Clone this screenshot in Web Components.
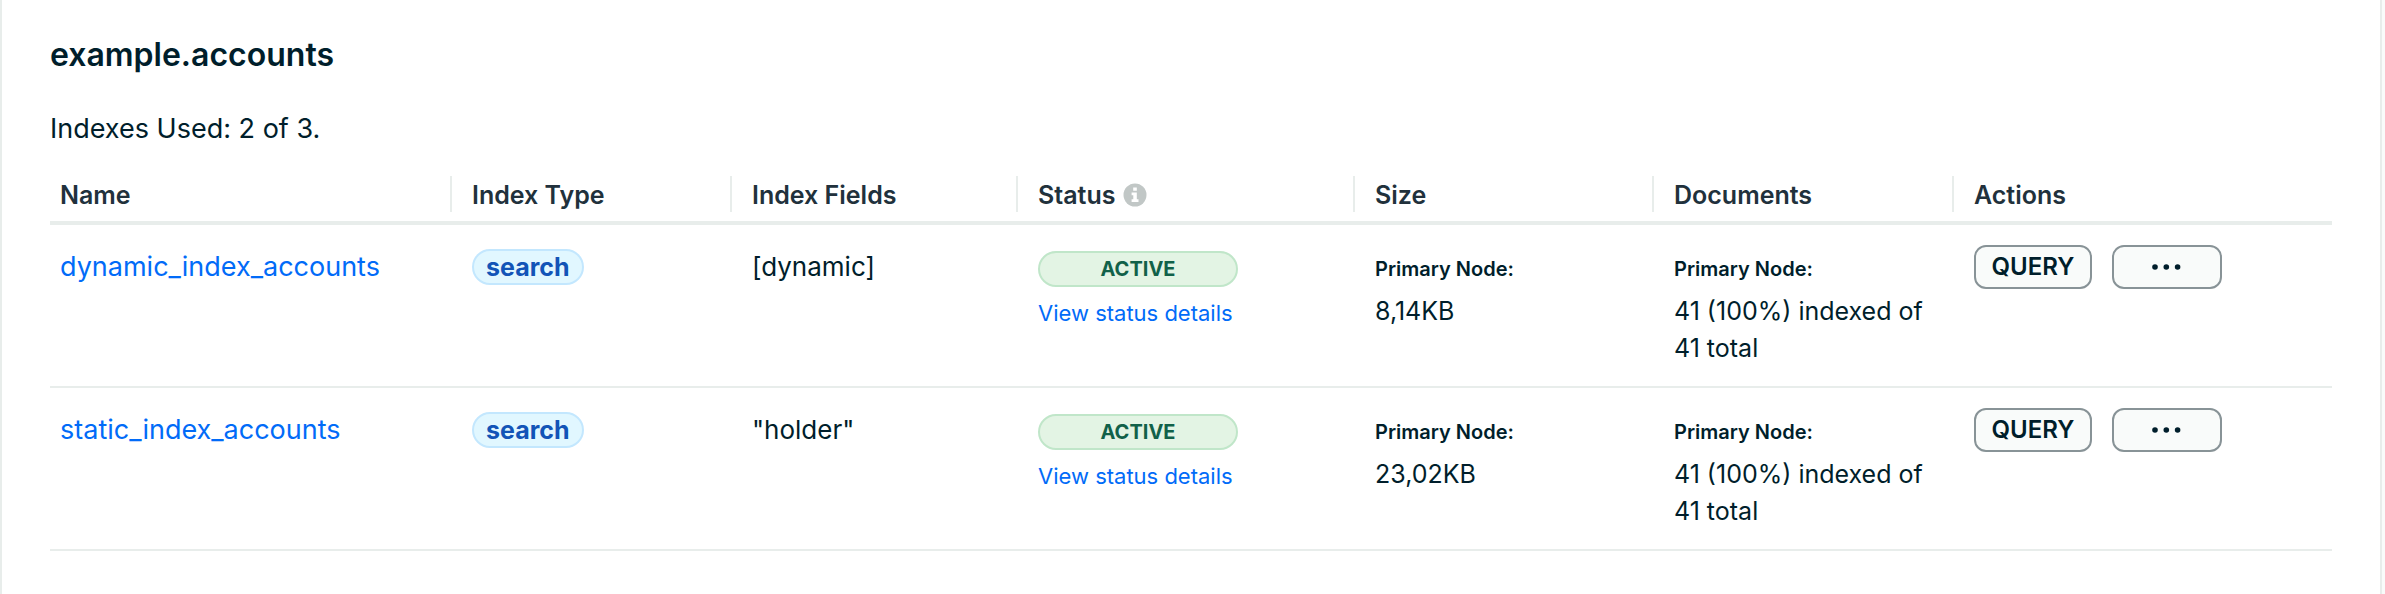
<!DOCTYPE html>
<html lang="en">
<head>
<meta charset="utf-8">
<title>Search indexes</title>
<style>
  html, body { height: 100%; }
  body { margin: 0; background: #f9fbfa; font-family: Inter, "Liberation Sans", sans-serif; color: #001e2b; }
</style>
</head>
<body>
<index-card heading="example.accounts" used="2" limit="3">
  <index-table></index-table>
</index-card>

<script>
class BaseElement extends HTMLElement {
  connectedCallback() {
    if (!this.shadowRoot) this.attachShadow({ mode: "open" }).innerHTML = this.render();
  }
}

customElements.define("index-card", class extends BaseElement {
  render() {
    return `
      <style>
        :host { display: block; box-sizing: border-box; min-height: 100%; margin-right: 3px;
                padding: 35px 48px 40px; background: #fff; border: solid #e8edeb; border-width: 0 2px; }
        h2 { margin: 0 0 34px; font-size: 32px; line-height: 40px; font-weight: 600; }
        p { margin: 0 0 27px; font-size: 27px; line-height: 40px; }
      </style>
      <h2>${this.getAttribute("heading")}</h2>
      <p>Indexes Used: ${this.getAttribute("used")} of ${this.getAttribute("limit")}.</p>
      <slot></slot>`;
  }
});

customElements.define("info-icon", class extends BaseElement {
  render() {
    return `
      <style>:host { display: block; } svg { display: block; }</style>
      <svg width="24" height="24" viewBox="0 0 24 24" role="img" aria-label="Info">
        <circle cx="12" cy="12" r="11.5" fill="#c1c7c6"/>
        <path fill="#fff" d="M10.2 4.5h3.6v3.3h-3.6zM8.6 9.6h5.2v6.7h1.7v2.7H8.6v-2.7h1.7v-4H8.6z"/>
      </svg>`;
  }
});

customElements.define("type-badge", class extends BaseElement {
  render() {
    return `
      <style>
        :host { display: inline-block; vertical-align: top; box-sizing: border-box; height: 36px; padding: 0 12px; margin-top: 4px;
                border: 2px solid #c3e7fe; border-radius: 18px; background: #e1f7ff;
                color: #1254b7; font-size: 25px; line-height: 32px; font-weight: 700; }
      </style><slot></slot>`;
  }
});

customElements.define("index-status", class extends BaseElement {
  render() {
    return `
      <style>
        :host { display: block; padding-top: 6px; }
        .pill { box-sizing: border-box; width: 200px; height: 36px; border: 2px solid #c0e6c9; border-radius: 18px;
                background: #e3f4e4; color: #116149; text-align: center;
                font-size: 20px; line-height: 32px; font-weight: 700; }
        a { display: block; margin-top: 10px; color: #016bf8; font-size: 22px; line-height: 32px; text-decoration: none; }
      </style>
      <div class="pill"><slot></slot></div>
      <a href="#status">View status details</a>`;
  }
});

customElements.define("node-stat", class extends BaseElement {
  render() {
    return `
      <style>
        :host { display: block; padding-top: 6px; }
        .label { font-size: 20px; line-height: 36px; font-weight: 600; }
        .value { margin-top: 6px; font-size: 25px; line-height: 37px; }
      </style>
      <div class="label">Primary Node:</div>
      <div class="value"><slot></slot></div>`;
  }
});

customElements.define("row-actions", class extends BaseElement {
  render() {
    return `
      <style>
        :host { display: flex; gap: 20px; }
        button { box-sizing: border-box; height: 44px; min-width: 110px; padding: 0; border: 2px solid #889397;
                 border-radius: 12px; background: #f9fbfa; color: #001e2b;
                 font: 600 24px/40px Inter, "Liberation Sans", sans-serif;
                 display: flex; align-items: center; justify-content: center; }
        .query { min-width: 118px; }
      </style>
      <button class="query" type="button">QUERY</button>
      <button type="button" aria-label="More actions">
        <svg width="30" height="8" viewBox="0 0 30 8" fill="#001e2b" aria-hidden="true">
          <circle cx="3" cy="4" r="2.8"/><circle cx="14.3" cy="4" r="2.8"/><circle cx="25.6" cy="4" r="2.8"/>
        </svg>
      </button>`;
  }
});

const INDEXES = [
  { name: "dynamic_index_accounts", type: "search", fields: "[dynamic]", status: "ACTIVE", size: "8,14KB", docs: "41 (100%) indexed of 41 total" },
  { name: "static_index_accounts", type: "search", fields: '"holder"', status: "ACTIVE", size: "23,02KB", docs: "41 (100%) indexed of 41 total" }
];

customElements.define("index-table", class extends BaseElement {
  render() {
    const rows = INDEXES.map(i => `
      <tr>
        <td class="link"><a href="#${i.name}">${i.name}</a></td>
        <td><type-badge>${i.type}</type-badge></td>
        <td class="text">${i.fields}</td>
        <td><index-status>${i.status}</index-status></td>
        <td><node-stat>${i.size}</node-stat></td>
        <td><node-stat>${i.docs}</node-stat></td>
        <td><row-actions></row-actions></td>
      </tr>`).join("");
    return `
      <style>
        :host { display: block; }
        table { width: 100%; table-layout: fixed; border-collapse: separate; border-spacing: 0; }
        th { padding: 0 0 9px; text-align: left; border-bottom: 4px solid #e8edeb; color: #21313c;
             font-size: 25px; line-height: 36px; font-weight: 600; }
        th > div { box-sizing: border-box; display: flex; align-items: center; gap: 8px; height: 36px;
                   padding: 2px 0 0 20px; border-right: 2px solid #e8edeb; }
        th:last-child > div { border-right: 0; }
        th:first-child > div { padding-left: 10px; }
        td { height: 141px; padding: 20px 20px 0; vertical-align: top; border-bottom: 2px solid #e8edeb; }
        td:first-child { padding-left: 10px; }
        .text, .link { font-size: 26px; line-height: 44px; }
        .link { font-size: 27px; }
        a { color: #016bf8; text-decoration: none; }
        .name { width: 402px; } .type { width: 280px; } .fields { width: 286px; }
        .status { width: 337px; } .size { width: 299px; } .docs { width: 300px; }
      </style>
      <table>
        <colgroup><col class="name"><col class="type"><col class="fields"><col class="status"><col class="size"><col class="docs"><col></colgroup>
        <thead><tr>
          <th><div>Name</div></th><th><div>Index Type</div></th><th><div>Index Fields</div></th>
          <th><div>Status<info-icon></info-icon></div></th>
          <th><div>Size</div></th><th><div>Documents</div></th><th><div>Actions</div></th>
        </tr></thead>
        <tbody>${rows}</tbody>
      </table>`;
  }
});
</script>
</body>
</html>
